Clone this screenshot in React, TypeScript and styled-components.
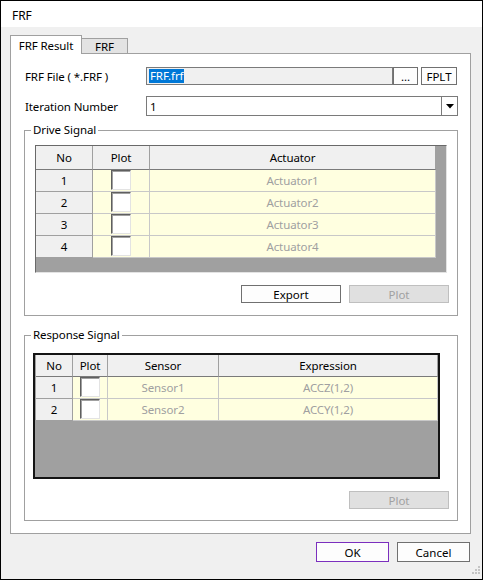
import React from 'react';
import styled, { createGlobalStyle } from 'styled-components';

const GlobalStyle = createGlobalStyle`
  html, body {
    margin: 0;
    padding: 0;
    background: #ffffff;
  }
  body {
    font-family: 'Noto Sans', 'Open Sans', sans-serif;
    font-size: 11.5px;
    letter-spacing: -0.1px;
    color: #000000;
  }
  * {
    box-sizing: border-box;
  }
`;

type Column = { title: string; width: number };
type Row = { no: number; values: string[] };

const driveColumns: Column[] = [
  { title: 'No', width: 57 },
  { title: 'Plot', width: 57 },
  { title: 'Actuator', width: 286 },
];

const driveRows: Row[] = [1, 2, 3, 4].map((n) => ({
  no: n,
  values: [`Actuator${n}`],
}));

const responseColumns: Column[] = [
  { title: 'No', width: 37 },
  { title: 'Plot', width: 35 },
  { title: 'Sensor', width: 111 },
  { title: 'Expression', width: 219 },
];

const responseRows: Row[] = [
  { no: 1, values: ['Sensor1', 'ACCZ(1,2)'] },
  { no: 2, values: ['Sensor2', 'ACCY(1,2)'] },
];

function DataGrid({
  columns,
  rows,
  framed,
  width,
  height,
  headHeight,
}: {
  columns: Column[];
  rows: Row[];
  framed?: boolean;
  width: number;
  height: number;
  headHeight: number;
}) {
  return (
    <GridFrame $framed={framed} $w={width} $h={height}>
      <Grid
        $cols={columns.map((c) => `${c.width}px`).join(' ')}
        $head={headHeight}
      >
        {columns.map((c) => (
          <HeadCell key={c.title}>{c.title}</HeadCell>
        ))}
        {rows.map((r) => (
          <React.Fragment key={r.no}>
            <IndexCell>{r.no}</IndexCell>
            <CheckCell>
              <CheckBox />
            </CheckCell>
            {r.values.map((v, i) => (
              <ValueCell key={i}>{v}</ValueCell>
            ))}
          </React.Fragment>
        ))}
      </Grid>
    </GridFrame>
  );
}

function App() {
  return (
    <>
      <GlobalStyle />
      <Window>
        <TitleBar>FRF</TitleBar>
        <Body>
          <TabStrip>
            <Tab $active>FRF Result</Tab>
            <Tab>FRF</Tab>
          </TabStrip>
          <Panel>
            <FieldRow $h={18} $mb={11}>
              <FieldLabel>FRF File ( *.FRF )</FieldLabel>
              <ReadonlyInput>
                <Selected>FRF.frf</Selected>
              </ReadonlyInput>
              <Button $w={25} $h={18}>
                ...
              </Button>
              <Button $w={36} $h={18} style={{ marginLeft: 3 }}>
                FPLT
              </Button>
            </FieldRow>
            <FieldRow $h={20} $mb={14}>
              <FieldLabel>Iteration Number</FieldLabel>
              <Combo>
                <ComboValue>1</ComboValue>
                <ComboArrow>
                  <svg width="8" height="5" viewBox="0 0 8 5">
                    <path d="M0 0 H8 L4 4.5 Z" fill="#000" />
                  </svg>
                </ComboArrow>
              </Combo>
            </FieldRow>

            <Group $pad="14px 8px 12px 10px">
              <Legend>Drive Signal</Legend>
              <DataGrid
                columns={driveColumns}
                rows={driveRows}
                width={412}
                height={128}
                headHeight={24}
              />
              <ButtonRow>
                <Button $w={100} $h={18}>
                  Export
                </Button>
                <Button $w={100} $h={18} disabled>
                  Plot
                </Button>
              </ButtonRow>
            </Group>

            <Group $pad="17px 8px 11px 8px" $mt={19}>
              <Legend>Response Signal</Legend>
              <DataGrid
                columns={responseColumns}
                rows={responseRows}
                framed
                width={407}
                height={126}
                headHeight={22}
              />
              <ButtonRow>
                <Button $w={100} $h={18} disabled>
                  Plot
                </Button>
              </ButtonRow>
            </Group>
          </Panel>
          <Footer>
            <Button $w={73} $h={20} $focused>
              OK
            </Button>
            <Button $w={73} $h={20}>
              Cancel
            </Button>
          </Footer>
        </Body>
        <SizeGrip width="12" height="12" viewBox="0 0 12 12">
          <rect x="9" y="1" width="2" height="2" fill="#c4c4c4" />
          <rect x="6" y="4" width="2" height="2" fill="#c4c4c4" />
          <rect x="9" y="4" width="2" height="2" fill="#c4c4c4" />
          <rect x="3" y="7" width="2" height="2" fill="#c4c4c4" />
          <rect x="6" y="7" width="2" height="2" fill="#c4c4c4" />
          <rect x="9" y="7" width="2" height="2" fill="#c4c4c4" />
        </SizeGrip>
      </Window>
    </>
  );
}

export default App;

const Window = styled.div`
  position: relative;
  width: 483px;
  height: 580px;
  border: 1px solid #000000;
  background: #f0f0f0;
  display: flex;
  flex-direction: column;
`;

const TitleBar = styled.div`
  height: 26px;
  background: #ffffff;
  padding: 3px 0 0 11px;
  display: flex;
  align-items: center;
  font-size: 12px;
`;

const Body = styled.div`
  display: flex;
  flex-direction: column;
  padding: 8px 11px 0 9px;
`;

const TabStrip = styled.div`
  display: flex;
  align-items: flex-end;
  height: 18px;
`;

const Tab = styled.div<{ $active?: boolean }>`
  position: relative;
  z-index: 1;
  display: flex;
  align-items: center;
  justify-content: center;
  width: ${({ $active }) => ($active ? '72px' : '46px')};
  height: ${({ $active }) => ($active ? '19px' : '15px')};
  margin-bottom: ${({ $active }) => ($active ? '-1px' : '0')};
  padding-top: ${({ $active }) => ($active ? '0' : '1px')};
  background: ${({ $active }) => ($active ? '#ffffff' : '#e3e3e3')};
  border: 1px solid #a0a0a0;
  border-bottom: none;
  border-left: ${({ $active }) => ($active ? '1px solid #a0a0a0' : 'none')};
`;

const Panel = styled.div`
  height: 481px;
  background: #ffffff;
  border: 1px solid #a0a0a0;
  padding: 13px 12px 12px 13px;
  display: flex;
  flex-direction: column;
`;

const FieldRow = styled.div<{ $h: number; $mb: number }>`
  display: flex;
  align-items: center;
  height: ${({ $h }) => $h}px;
  margin-bottom: ${({ $mb }) => $mb}px;
`;

const FieldLabel = styled.label`
  width: 122px;
  padding-left: 1px;
`;

const ReadonlyInput = styled.div`
  width: 247px;
  height: 18px;
  border: 1px solid #7a7a7a;
  background: #f0f0f0;
  padding-left: 2px;
  display: flex;
  align-items: center;
`;

const Selected = styled.span`
  background: #0078d7;
  color: #ffffff;
  line-height: 14px;
  padding: 0 1px;
`;

const Combo = styled.div`
  width: 312px;
  height: 20px;
  border: 1px solid #7a7a7a;
  background: #ffffff;
  display: flex;
`;

const ComboValue = styled.div`
  flex: 1;
  display: flex;
  align-items: center;
  padding-left: 3px;
`;

const ComboArrow = styled.div`
  width: 16px;
  border-left: 1px solid #7a7a7a;
  display: flex;
  align-items: center;
  justify-content: center;
`;

const Group = styled.div<{ $pad: string; $mt?: number }>`
  position: relative;
  height: 186px;
  margin-top: ${({ $mt }) => $mt ?? 0}px;
  border: 1px solid #a0a0a0;
  padding: ${({ $pad }) => $pad};
  display: flex;
  flex-direction: column;
`;

const Legend = styled.span`
  position: absolute;
  top: -9px;
  left: 6px;
  padding: 0 2px;
  background: #ffffff;
  line-height: 16px;
`;

const GridFrame = styled.div<{ $framed?: boolean; $w: number; $h: number }>`
  width: ${({ $w }) => $w}px;
  height: ${({ $h }) => $h}px;
  flex-shrink: 0;
  overflow: hidden;
  background: #a0a0a0;
  border-style: solid;
  border-width: ${({ $framed }) => ($framed ? '2px' : '1px')};
  border-color: ${({ $framed }) =>
    $framed ? '#141414' : '#696969 #e3e3e3 #e3e3e3 #696969'};
  padding-left: ${({ $framed }) => ($framed ? '1px' : '0')};
`;

const Grid = styled.div<{ $cols: string; $head: number }>`
  display: grid;
  grid-template-columns: ${({ $cols }) => $cols};
  grid-template-rows: ${({ $head }) => $head}px;
  grid-auto-rows: 22px;
`;

const HeadCell = styled.div`
  display: flex;
  align-items: center;
  justify-content: center;
  background: #f0f0f0;
  border-right: 1px solid #a0a0a0;
  border-bottom: 1px solid #7a7a7a;
`;

const IndexCell = styled.div`
  display: flex;
  align-items: center;
  justify-content: center;
  background: #f0f0f0;
  border-right: 1px solid #a0a0a0;
  border-bottom: 1px solid #a0a0a0;
`;

const CheckCell = styled.div`
  display: flex;
  align-items: center;
  justify-content: center;
  background: #ffffe0;
  border-right: 1px solid #c8c8c8;
  border-bottom: 1px solid #c8c8c8;
`;

const CheckBox = styled.div`
  width: 20px;
  height: 20px;
  margin-bottom: 1px;
  background: #ffffff;
  border: 1px solid;
  border-color: #5f5f5f #e3e3e3 #e3e3e3 #5f5f5f;
  box-shadow: inset 1px 1px 0 #a0a0a0;
`;

const ValueCell = styled.div`
  display: flex;
  align-items: center;
  justify-content: center;
  background: #ffffe0;
  color: #a0a0a0;
  border-right: 1px solid #c8c8c8;
  border-bottom: 1px solid #c8c8c8;
`;

const ButtonRow = styled.div`
  display: flex;
  justify-content: flex-end;
  gap: 8px;
  margin-top: 12px;
`;

const Button = styled.button<{ $w: number; $h: number; $focused?: boolean }>`
  width: ${({ $w }) => $w}px;
  height: ${({ $h }) => $h}px;
  padding: 0;
  font: inherit;
  color: #000000;
  background: #fdfdfd;
  border: 1px solid ${({ $focused }) => ($focused ? '#7b2fbe' : '#707070')};
  display: flex;
  align-items: center;
  justify-content: center;

  &:disabled {
    background: #e0e0e0;
    border-color: #bfbfbf;
    color: #a0a0a0;
  }
`;

const Footer = styled.div`
  display: flex;
  justify-content: flex-end;
  gap: 8px;
  margin-top: 8px;
  padding-right: 1px;
`;

const SizeGrip = styled.svg`
  position: absolute;
  right: 1px;
  bottom: 2px;
`;
